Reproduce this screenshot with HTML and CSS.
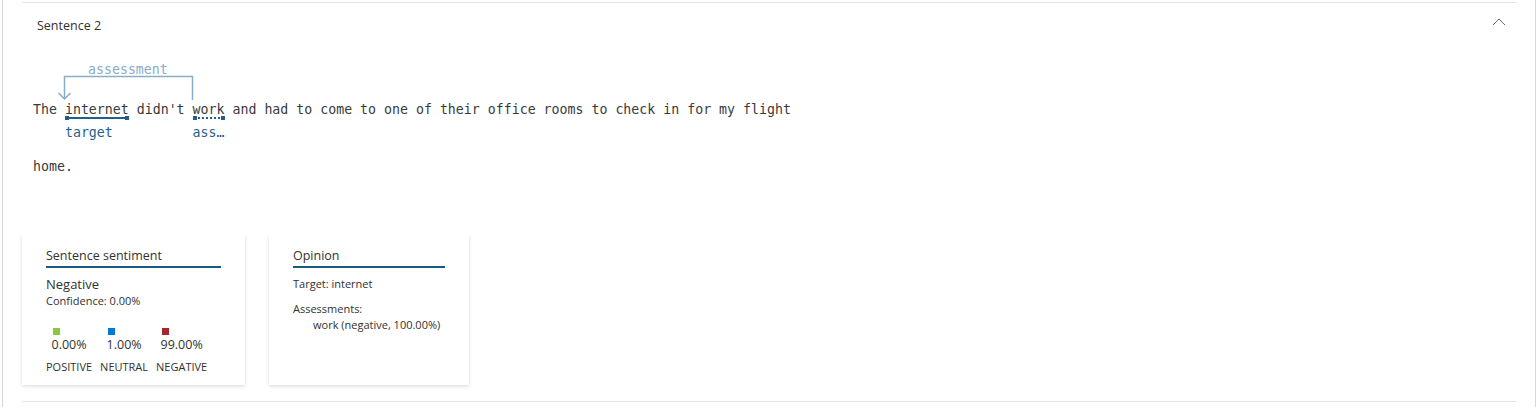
FILE: index.html
```html
<!DOCTYPE html>
<html lang="en">
<head>
<meta charset="utf-8">
<title>Sentence 2</title>
<link rel="stylesheet" href="styles.css">
</head>
<body>
<div class="frame">
  <section class="item">
    <header class="item-head">
      <span class="item-title">Sentence 2</span>
      <svg class="chevron" width="14" height="9" viewBox="0 0 14 9"><path d="M1 8 L7 2 L13 8" fill="none" stroke="#6b6b6b" stroke-width="1"/></svg>
    </header>
    <div class="item-body">
      <div class="sent">
        <div class="line line-first"><svg class="arc" width="170" height="40" viewBox="0 0 170 40"><path d="M159.5 36 V12.5 H31.5 V35" fill="none" stroke="#8aaccb" stroke-width="1.5"/><path d="M25.5 29 L31.5 35 L37.5 29" fill="none" stroke="#8aaccb" stroke-width="1.5"/></svg><span class="arc-label">assessment</span>The <span class="tok">internet<span class="uline solid"></span><span class="tok-label">target</span></span> didn't <span class="tok">work<span class="uline dotted"></span><span class="tok-label">ass…</span></span> and had to come to one of their office rooms to check in for my flight</div>
        <div class="line line-second">home.</div>
      </div>
      <div class="cards">
        <div class="card card-sent">
          <div class="card-title">Sentence sentiment</div>
          <div class="sent-label">Negative</div>
          <div class="small">Confidence: 0.00%</div>
          <div class="scores">
            <div class="score">
              <div class="score-top"><span class="sq pos"></span><span class="pct">0.00%</span></div>
              <span class="score-name">POSITIVE</span>
            </div>
            <div class="score">
              <div class="score-top"><span class="sq neu"></span><span class="pct">1.00%</span></div>
              <span class="score-name">NEUTRAL</span>
            </div>
            <div class="score">
              <div class="score-top"><span class="sq neg"></span><span class="pct">99.00%</span></div>
              <span class="score-name">NEGATIVE</span>
            </div>
          </div>
        </div>
        <div class="card card-op">
          <div class="card-title">Opinion</div>
          <div class="small op-target">Target: internet</div>
          <div class="small op-ass">Assessments:</div>
          <div class="small op-item">work (negative, 100.00%)</div>
        </div>
      </div>
    </div>
  </section>
</div>
</body>
</html>
```

FILE: styles.css
```css
html, body {
  margin: 0;
  padding: 0;
  background: #ffffff;
}
body {
  font-family: "Open Sans", "Noto Sans", sans-serif;
  color: #323130;
  overflow: hidden;
}
.frame {
  margin-left: 2px;
  width: 1494px;
  height: 407px;
  border-left: 1px solid #d6d6d6;
  border-right: 1px solid #d6d6d6;
  padding: 2px 19px 0 19px;
}
.item {
  border-top: 1px solid #e6e6e6;
  border-bottom: 1px solid #e6e6e6;
}
.item-head {
  height: 46px;
  display: flex;
  align-items: center;
  justify-content: space-between;
  padding: 0 10px 0 15px;
}
.item-title {
  font-size: 12.5px;
  color: #323130;
  margin-top: -2px;
}
.chevron {
  margin-top: -10px;
}
.item-body {
  padding: 15px 0 16px 0;
}
.sent {
  padding-left: 11px;
  font-family: "DejaVu Sans Mono", "Liberation Mono", monospace;
  font-size: 13.25px;
  color: #3a3a3a;
  white-space: nowrap;
}
.line {
  line-height: 20px;
  position: relative;
}
.line-first {
  padding-top: 36px;
  padding-bottom: 37px;
}
.line-second {
  padding-bottom: 5px;
}
.arc {
  position: absolute;
  left: 0;
  top: 0;
}
.arc-label {
  position: absolute;
  left: 55px;
  top: -2px;
  font-size: 13.25px;
  color: #8aaccb;
  line-height: 16px;
}
.tok {
  position: relative;
}
.uline {
  position: absolute;
  left: 0;
  right: 1px;
  top: 15px;
  height: 0;
}
.uline.solid {
  border-top: 2px solid #1f5f8f;
}
.uline.dotted {
  border-top: 2px dotted #1f5f8f;
}
.uline::before, .uline::after {
  content: "";
  position: absolute;
  top: -3px;
  width: 4px;
  height: 4px;
  background: #1f5f8f;
}
.uline::before { left: 0; }
.uline::after { right: -1px; }
.tok-label {
  position: absolute;
  left: 0;
  top: 22px;
  color: #1f5f8f;
  line-height: 18px;
}
.cards {
  display: flex;
  gap: 24px;
  margin-top: 52px;
}
.card {
  background: #fff;
  box-shadow: 0 1.6px 3.6px rgba(0,0,0,0.14), 0 0.3px 0.9px rgba(0,0,0,0.11);
  padding: 13px 24px 0 24px;
  height: 138px;
}
.card-sent { width: 175px; }
.card-op { width: 152px; }
.card-title {
  font-size: 12.5px;
  line-height: 18px;
  padding-bottom: 1px;
  border-bottom: 2px solid #1b5a80;
}
.sent-label {
  font-size: 13px;
  line-height: 18px;
  margin-top: 7px;
}
.small {
  font-size: 11px;
  line-height: 15px;
}
.scores {
  display: flex;
  gap: 8px;
  margin-top: 20px;
}
.score {
  display: flex;
  flex-direction: column;
  align-items: center;
}
.score-top {
  display: flex;
  flex-direction: column;
  align-items: flex-start;
}
.sq {
  display: block;
  width: 7px;
  height: 7px;
  margin-left: 1px;
}
.sq.pos { background: #8dc63f; }
.sq.neu { background: #0078d4; }
.sq.neg { background: #a4262c; }
.pct {
  font-size: 12.5px;
  line-height: 18px;
  margin-top: 1px;
}
.score-name {
  font-size: 11px;
  line-height: 15px;
  margin-top: 5px;
}
.op-target {
  margin-top: 8px;
}
.op-ass {
  margin-top: 10px;
}
.op-item {
  padding-left: 20px;
  margin-top: 1px;
}
```
